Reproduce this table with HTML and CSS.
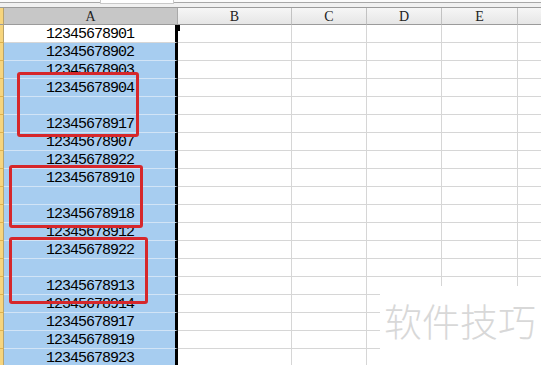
FILE: index.html
```html
<!DOCTYPE html>
<html lang="zh">
<head>
    <meta charset="UTF-8">
    <meta name="viewport" content="width=device-width, initial-scale=1.0">
    <title>Sheet1</title>
    <link rel="stylesheet" href="styles.css">
</head>
<body>
    <div class="wrap">
        <div class="ribbon"><span class="tab"></span></div>
        <div class="grid">
            <!-- column headers -->
            <div class="corner"></div>
            <div class="colhead sel">A</div>
            <div class="colhead">B</div>
            <div class="colhead">C</div>
            <div class="colhead">D</div>
            <div class="colhead">E</div>
            <div class="colhead"></div>

            <div class="rowhead"></div><div class="cell a active">12345678901</div><div class="cell"></div><div class="cell"></div><div class="cell"></div><div class="cell"></div><div class="cell"></div>
            <div class="rowhead"></div><div class="cell a">12345678902</div><div class="cell"></div><div class="cell"></div><div class="cell"></div><div class="cell"></div><div class="cell"></div>
            <div class="rowhead"></div><div class="cell a">12345678903</div><div class="cell"></div><div class="cell"></div><div class="cell"></div><div class="cell"></div><div class="cell"></div>
            <div class="rowhead"></div><div class="cell a">12345678904</div><div class="cell"></div><div class="cell"></div><div class="cell"></div><div class="cell"></div><div class="cell"></div>
            <div class="rowhead"></div><div class="cell a"></div><div class="cell"></div><div class="cell"></div><div class="cell"></div><div class="cell"></div><div class="cell"></div>
            <div class="rowhead"></div><div class="cell a">12345678917</div><div class="cell"></div><div class="cell"></div><div class="cell"></div><div class="cell"></div><div class="cell"></div>
            <div class="rowhead"></div><div class="cell a">12345678907</div><div class="cell"></div><div class="cell"></div><div class="cell"></div><div class="cell"></div><div class="cell"></div>
            <div class="rowhead"></div><div class="cell a">12345678922</div><div class="cell"></div><div class="cell"></div><div class="cell"></div><div class="cell"></div><div class="cell"></div>
            <div class="rowhead"></div><div class="cell a">12345678910</div><div class="cell"></div><div class="cell"></div><div class="cell"></div><div class="cell"></div><div class="cell"></div>
            <div class="rowhead"></div><div class="cell a"></div><div class="cell"></div><div class="cell"></div><div class="cell"></div><div class="cell"></div><div class="cell"></div>
            <div class="rowhead"></div><div class="cell a">12345678918</div><div class="cell"></div><div class="cell"></div><div class="cell"></div><div class="cell"></div><div class="cell"></div>
            <div class="rowhead"></div><div class="cell a">12345678912</div><div class="cell"></div><div class="cell"></div><div class="cell"></div><div class="cell"></div><div class="cell"></div>
            <div class="rowhead"></div><div class="cell a">12345678922</div><div class="cell"></div><div class="cell"></div><div class="cell"></div><div class="cell"></div><div class="cell"></div>
            <div class="rowhead"></div><div class="cell a"></div><div class="cell"></div><div class="cell"></div><div class="cell"></div><div class="cell"></div><div class="cell"></div>
            <div class="rowhead"></div><div class="cell a">12345678913</div><div class="cell"></div><div class="cell"></div><div class="cell"></div><div class="cell"></div><div class="cell"></div>
            <div class="rowhead"></div><div class="cell a">12345678914</div><div class="cell"></div><div class="cell"></div><div class="cell"></div><div class="cell"></div><div class="cell"></div>
            <div class="rowhead"></div><div class="cell a">12345678917</div><div class="cell"></div><div class="cell"></div><div class="cell"></div><div class="cell"></div><div class="cell"></div>
            <div class="rowhead"></div><div class="cell a">12345678919</div><div class="cell"></div><div class="cell"></div><div class="cell"></div><div class="cell"></div><div class="cell"></div>
            <div class="rowhead"></div><div class="cell a">12345678923</div><div class="cell"></div><div class="cell"></div><div class="cell"></div><div class="cell"></div><div class="cell"></div>
        </div>

        <!-- selection handle and highlight frames -->
        <div class="handle"></div>
        <div class="mark mark-1"></div>
        <div class="mark mark-2"></div>
        <div class="mark mark-3"></div>

        <div class="stamp">软件技巧</div>
    </div>
</body>
</html>
```

FILE: styles.css
```css
body {
    margin: 0;
    background: #fff;
    overflow: hidden;
}

.wrap {
    position: relative;
    width: 541px;
    height: 365px;
    overflow: hidden;
    font-family: "Liberation Mono", "DejaVu Sans Mono", monospace;
}

/* strip left over from the toolbar above the sheet */
.ribbon {
    height: 8px;
    box-sizing: border-box;
    background: #f1f1f1;
    border-top: 3px solid #fbfbfb;
    border-bottom: 1px solid #9b9b9b;
    position: relative;
}

.ribbon::before {
    content: "";
    position: absolute;
    left: 0;
    right: 0;
    top: -1px;
    height: 1px;
    background: #a8a8a8;
}

.tab {
    position: absolute;
    left: 100px;
    top: -3px;
    width: 72px;
    height: 3px;
    background: #fff;
    border: 1px solid #c9c9c9;
    border-top: none;
}

.grid {
    display: grid;
    grid-template-columns: 4px 174px 114px 75px 75px 76px 40px;
    grid-template-rows: 17px;
    grid-auto-rows: 18px;
}

.grid > div {
    box-sizing: border-box;
}

.corner {
    background: #f7d57d;
    border-right: 1px solid #b9a36c;
    border-bottom: 1px solid #9b9b9b;
}

.colhead {
    background: linear-gradient(#f6f6f6, #e6e6e6);
    border-right: 1px solid #c2c2c2;
    border-bottom: 1px solid #9b9b9b;
    text-align: center;
    font-family: "Liberation Serif", serif;
    font-size: 14px;
    line-height: 18px;
    color: #222;
}

.colhead.sel {
    background: #c7c7c7;
    border-right-color: #a9a9a9;
}

.rowhead {
    background: #f7d57d;
    border-right: 1px solid #b9a36c;
    border-bottom: 1px solid #dfb24e;
}

.cell {
    border-right: 1px solid #d6d6d6;
    border-bottom: 1px solid #d6d6d6;
}

.cell.a {
    background: #a7cdf0;
    border-bottom-color: #d2e4f6;
    border-right: 3px solid #000;
    text-align: center;
    font-size: 15px;
    letter-spacing: -1px;
    text-indent: 1px;
    line-height: 20px;
    color: #000;
    overflow: hidden;
}

.cell.a.active {
    background: #fff;
    border-bottom-color: #d6d6d6;
}

.handle {
    position: absolute;
    left: 175px;
    top: 25px;
    width: 5px;
    height: 6px;
    background: #000;
}

.mark {
    position: absolute;
    box-sizing: border-box;
    border: 3px solid #d6272b;
    border-radius: 3px;
}

.mark-1 {
    left: 17px;
    top: 72px;
    width: 122px;
    height: 65px;
}

.mark-2 {
    left: 9px;
    top: 165px;
    width: 134px;
    height: 63px;
}

.mark-3 {
    left: 9px;
    top: 237px;
    width: 139px;
    height: 67px;
}

.stamp {
    position: absolute;
    left: 380px;
    top: 286px;
    right: 0;
    bottom: 0;
    background: #fff;
    padding: 15px 0 0 4px;
    font-family: "Noto Sans CJK SC", sans-serif;
    font-size: 38px;
    font-weight: 300;
    line-height: 1;
    color: #d8d8d8;
    white-space: nowrap;
}
```
